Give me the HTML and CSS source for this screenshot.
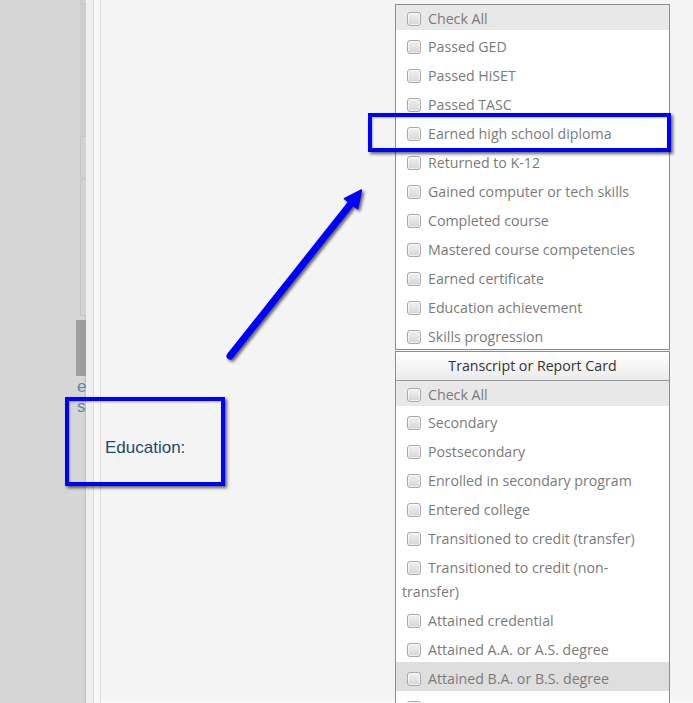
FILE: index.html
```html
<!DOCTYPE html>
<html>
<head>
<meta charset="utf-8">
<link rel="stylesheet" href="styles.css">
</head>
<body>
<div class="page">
  <aside class="sidebar">
    <div class="sb-box sb-top"></div>
    <div class="sb-shade"></div>
    <div class="sb-box sb-mid"></div>
    <div class="sb-box sb-long"></div>
    <div class="sb-thumb"></div>
    <div class="sb-text">e<br>s</div>
  </aside>
  <div class="gutter"><div class="gutter-inner"></div></div>
  <main class="main">
    <div class="label-col">
      <span class="field-label">Education:</span>
    </div>
    <div class="list-col">
      <div class="panel">
        <div class="row check-all"><span class="cb"></span>Check All</div>
        <div class="row"><span class="cb"></span>Passed GED</div>
        <div class="row"><span class="cb"></span>Passed HiSET</div>
        <div class="row"><span class="cb"></span>Passed TASC</div>
        <div class="row"><span class="cb"></span>Earned high school diploma</div>
        <div class="row"><span class="cb"></span>Returned to K-12</div>
        <div class="row"><span class="cb"></span>Gained computer or tech skills</div>
        <div class="row"><span class="cb"></span>Completed course</div>
        <div class="row"><span class="cb"></span>Mastered course competencies</div>
        <div class="row"><span class="cb"></span>Earned certificate</div>
        <div class="row"><span class="cb"></span>Education achievement</div>
        <div class="row"><span class="cb"></span>Skills progression</div>
      </div>
      <div class="panel panel-2">
        <div class="panel-head">Transcript or Report Card</div>
        <div class="row check-all"><span class="cb"></span>Check All</div>
        <div class="row"><span class="cb"></span>Secondary</div>
        <div class="row"><span class="cb"></span>Postsecondary</div>
        <div class="row"><span class="cb"></span>Enrolled in secondary program</div>
        <div class="row"><span class="cb"></span>Entered college</div>
        <div class="row"><span class="cb"></span>Transitioned to credit (transfer)</div>
        <div class="row row-wrap"><span class="cb"></span>Transitioned to credit (non-transfer)</div>
        <div class="row"><span class="cb"></span>Attained credential</div>
        <div class="row"><span class="cb"></span>Attained A.A. or A.S. degree</div>
        <div class="row hover"><span class="cb"></span>Attained B.A. or B.S. degree</div>
        <div class="row"><span class="cb"></span></div>
      </div>
    </div>
  </main>
</div>

<div class="callout callout-item"></div>
<div class="callout callout-label"></div>
<svg class="arrow" width="693" height="703" viewBox="0 0 693 703">
  <line x1="230" y1="356" x2="351" y2="203.5" stroke="#0000ff" stroke-width="7" stroke-linecap="round"/>
  <polygon points="361.5,190 357.6,208.6 344.4,198.6" fill="#0000ff" stroke="#0000ff" stroke-width="1.5" stroke-linejoin="round"/>
</svg>
</body>
</html>
```
FILE: styles.css
```css
* { box-sizing: border-box; }
html, body { margin: 0; padding: 0; }
body {
  width: 693px;
  height: 703px;
  overflow: hidden;
  position: relative;
  background: #f4f4f4;
}
.page {
  display: flex;
  height: 703px;
}
.sidebar {
  width: 86px;
  flex: none;
  background: #d6d6d6;
  overflow: hidden;
  display: flex;
  flex-direction: column;
  box-shadow: inset -2px 0 2px -1px rgba(0,0,0,0.12);
}
.sb-box {
  margin-left: 80px;
  width: 7px;
  border: 1px solid #c6c6c4;
  background: #d2d2d0;
}
.sb-top { height: 4px; border-top: none; }
.sb-shade {
  margin-left: 80px;
  height: 132px;
  background: linear-gradient(to right, #d0d0d0, #cbcbcb);
}
.sb-mid { height: 42px; }
.sb-long { height: 137px; margin-top: 1px; }
.sb-thumb {
  margin-top: 4px;
  margin-left: 76px;
  height: 56px;
  background: #9e9e9e;
}
.sb-text {
  margin-top: 1px;
  padding-left: 77px;
  font: 17px/20px "Liberation Sans", Arial, sans-serif;
  color: #5f87a8;
  white-space: nowrap;
}
.gutter {
  width: 15px;
  flex: none;
  background: #efefef;
  padding-left: 7px;
}
.gutter-inner {
  height: 100%;
  border-left: 1px solid #dcdcdc;
  border-right: 1px solid #dcdcdc;
  background: #f7f7f7;
}
.main {
  flex: 1;
  display: grid;
  grid-template-columns: 294px 275px;
  align-items: start;
  padding-top: 4px;
  background: #f4f4f4;
  border-bottom: 2px solid #f9f9f9;
}
.label-col {
  padding-top: 434px;
  padding-left: 4px;
}
.field-label {
  font: 17px/20px "Liberation Sans", Arial, sans-serif;
  color: #1d4a6c;
}
.list-col {
  display: flex;
  flex-direction: column;
  gap: 1px;
}
.panel {
  background: #fff;
  border: 1px solid #8c8c8c;
  font-family: "Open Sans", "Noto Sans", sans-serif;
  font-size: 14.2px;
  color: #7a7a7a;
}
.row {
  height: 29px;
  padding: 5px 0 0 6px;
  line-height: 24px;
  white-space: nowrap;
  overflow: hidden;
}
.row.check-all {
  height: 25px;
  padding-top: 2px;
  background: #e8e8e8;
}
.row.hover { background: #dedede; }
.row.row-wrap {
  height: 53px;
  white-space: normal;
  padding-right: 50px;
}
.cb {
  display: inline-block;
  width: 14px;
  height: 14px;
  margin: 0 7px 0 5px;
  vertical-align: -2px;
  border: 1px solid #a8a8a8;
  border-radius: 3px;
  background: linear-gradient(#f2f2f2, #d6d6d6);
  box-shadow: inset 0 0 0 1px rgba(255,255,255,0.6);
}
.panel-head {
  height: 29px;
  line-height: 28px;
  text-align: center;
  color: #333;
  background: linear-gradient(#ffffff, #ebebeb);
  border-bottom: 1px solid #9a9a9a;
}
.callout {
  position: absolute;
  border: 4px solid #0000ff;
  box-shadow: 2px 2px 3px rgba(0,0,0,0.6), inset 1px 1px 2px rgba(0,0,0,0.25);
  pointer-events: none;
}
.callout-item {
  left: 368px;
  top: 113px;
  width: 303px;
  height: 39px;
}
.callout-label {
  left: 65px;
  top: 397px;
  width: 160px;
  height: 89px;
}
.arrow {
  position: absolute;
  left: 0;
  top: 0;
  pointer-events: none;
  filter: drop-shadow(2px 2px 1.5px rgba(0,0,0,0.6));
}
```
